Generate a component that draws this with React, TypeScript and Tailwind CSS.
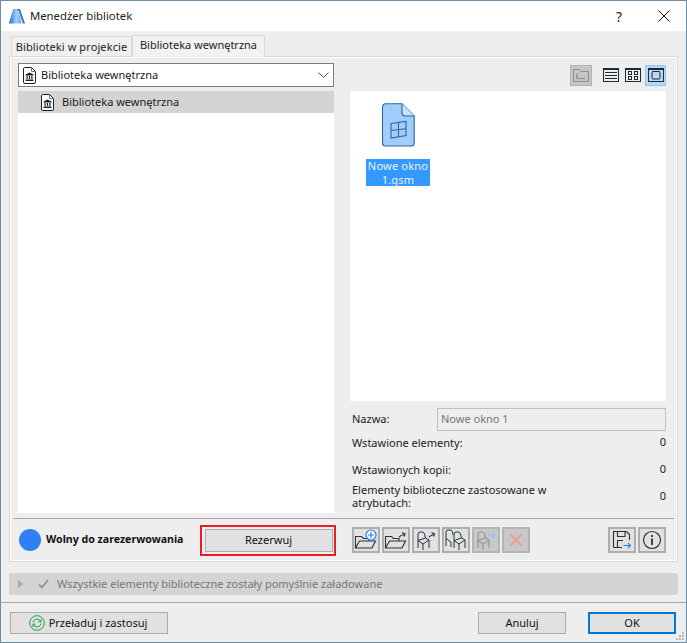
const LibIcon = () => (
  <svg width="13" height="17" viewBox="0 0 13 17" fill="none" stroke="#1a2228" strokeWidth="1">
    <path d="M1.5 .5H8.5L12.5 4.5V15A1.5 1.5 0 0 1 11 16.5H2A1.5 1.5 0 0 1 .5 15V2A1.5 1.5 0 0 1 1.5 .5Z" fill="#fff" />
    <path d="M8.5 .5V4.5H12.5" stroke="#777" />
    <path d="M2.5 8.5V7.5L6.5 5.5L10.5 7.5V8.5Z" fill="#1a2228" stroke="none" />
    <rect x="3.5" y="9" width="1.2" height="3" fill="#1a2228" stroke="none" />
    <rect x="5.9" y="9" width="1.2" height="3" fill="#1a2228" stroke="none" />
    <rect x="8.3" y="9" width="1.2" height="3" fill="#1a2228" stroke="none" />
    <rect x="2.5" y="12.5" width="8" height="1.5" fill="#1a2228" stroke="none" />
  </svg>
);

const Chair = ({ x = 0, y = 0, stroke = "#27323a" }: { x?: number; y?: number; stroke?: string }) => (
  <g transform={`translate(${x} ${y})`} fill="none" stroke={stroke} strokeWidth="1">
    <path d="M1 18V4Q1 2 3.5 2H5Q7 2 7.5 4L8.5 8" />
    <path d="M1 10.5L6 14L12 10L8.5 8Z" />
    <path d="M6 14V20M12 10V18" />
  </g>
);

const ToolBtn = ({ children, dim, className = "" }: { children?: React.ReactNode; dim?: boolean; className?: string }) => (
  <div className={`flex h-[26px] w-[28px] items-center justify-center border-2 ${dim ? "border-[#b4b4b4] bg-[#c8c8c8]" : "border-[#adadad] bg-[#e1e1e1]"} ${className}`}>
    {children}
  </div>
);

const Btn = ({ children, className = "" }: { children: React.ReactNode; className?: string }) => (
  <div className={`flex h-[22px] items-center justify-center bg-[#e1e1e1] text-[#111] ${className}`}>{children}</div>
);

const FolderIcon = ({ children }: { children?: React.ReactNode }) => (
  <svg width="24" height="22" viewBox="0 0 24 22" fill="none">
    <path d="M1.5 19V7.5H7.5L9.5 9.5H15V12M1.5 19L5.5 12H21.5L18 19H1.5Z" stroke="#27323a" strokeWidth="1.1" />
    {children}
  </svg>
);

const StatRow = ({ label, value, h }: { label: React.ReactNode; value: string; h: string }) => (
  <div className={`flex items-center justify-between pl-[2px] ${h}`}>
    <div className="w-[210px] leading-[13px]">{label}</div>
    <div>{value}</div>
  </div>
);

export default function App() {
  return (
    <div
      className="relative flex h-[643px] w-[687px] flex-col overflow-hidden border border-[#6e8ba6] bg-[#eeeeee] text-[11px] text-[#1a1a1a]"
      style={{ fontFamily: '"Noto Sans", sans-serif' }}
    >
      {/* Title bar */}
      <div className="flex h-[30px] shrink-0 items-center bg-white pl-[8px] pr-[14px]">
        <svg width="16" height="16" viewBox="0 0 16 16" className="mr-[5px]">
          <defs>
            <linearGradient id="lg" x1="0" x2="1" y1="0" y2="0">
              <stop offset="0" stopColor="#1f6ad8" />
              <stop offset="0.6" stopColor="#9fd0fb" />
              <stop offset="1" stopColor="#5aa6f5" />
            </linearGradient>
          </defs>
          <path d="M0 15.5L4.5 1H11L16 15.5H13.8L9.5 2.6Z" fill="#3f78c4" />
          <path d="M0 15.5L4.5 1H8Q11.5 8 12.5 15.5Z" fill="url(#lg)" />
        </svg>
        <span className="text-[11.3px] text-[#222]">Menedżer bibliotek</span>
        <span className="ml-auto mr-[36px] text-[14px] text-[#222]">?</span>
        <svg width="12" height="12" viewBox="0 0 12 12" stroke="#111" strokeWidth="1" className="mr-[2px]">
          <path d="M.5 .5L11.5 11.5M11.5 .5L.5 11.5" />
        </svg>
      </div>

      {/* Tabs */}
      <div className="flex h-[25px] shrink-0 items-end pl-[10px] pt-[4px]">
        <div className="flex h-[20px] w-[121px] items-center justify-center border border-b-0 border-[#d9d9d9] bg-[#f0f0f0] pt-[1px] tracking-[0.1px] text-[#222]">
          Biblioteki w projekcie
        </div>
        <div className="z-10 -mb-px flex h-[22px] w-[133px] items-center justify-center border border-b-0 border-[#d9d9d9] bg-[#f2f2f2] pb-[2px] text-[#222]">
          Biblioteka wewnętrzna
        </div>
      </div>

      {/* Panel */}
      <div className="mx-[8px] flex h-[506px] shrink-0 flex-col border border-[#d9d9d9] bg-[#eeeeee] shadow-[inset_0_0_0_1px_#ffffff]">
        <div className="flex h-[456px] shrink-0 gap-[16px] pl-[8px] pt-[6px]">
          {/* Left */}
          <div className="flex w-[316px] flex-col">
            <div className="flex h-[24px] shrink-0 items-center border border-[#7a7a7a] bg-white pl-[4px] pr-[4px]">
              <LibIcon />
              <span className="ml-[5px]">Biblioteka wewnętrzna</span>
              <svg width="11" height="6" viewBox="0 0 11 6" fill="none" stroke="#555" className="ml-auto">
                <path d="M.5 .5L5.5 5.5L10.5 .5" />
              </svg>
            </div>
            <div className="mt-[4px] flex-1 bg-white">
              <div className="flex h-[22px] items-center bg-[#d4d4d4] pl-[23px]">
                <LibIcon />
                <span className="ml-[8px]">Biblioteka wewnętrzna</span>
              </div>
            </div>
          </div>

          {/* Right */}
          <div className="flex w-[316px] flex-col">
            <div className="flex h-[24px] shrink-0 items-center">
              <div className="ml-[220px] flex h-[21px] w-[22px] items-center justify-center border border-[#b4b4b4] bg-[#c6c6c6]">
                <svg width="16" height="15" viewBox="0 0 16 15" fill="none" stroke="#8d8d8d">
                  <path d="M.5 13.5V1.5H6.5L8 3.5H15.5V13.5H.5Z" />
                  <path d="M5.5 5L3.5 7L5.5 9M3.5 7V10.5H12" />
                </svg>
              </div>
              <svg width="16" height="14" viewBox="0 0 16 14" fill="none" stroke="#1f2a33" className="ml-[11px]">
                <rect x=".5" y=".5" width="15" height="13" />
                <path d="M0 1H16" strokeWidth="2" />
                <path d="M2 4.5H14M2 7.5H14M2 10.5H14" />
              </svg>
              <svg width="16" height="14" viewBox="0 0 16 14" fill="none" stroke="#1f2a33" className="ml-[6px]">
                <rect x=".5" y=".5" width="15" height="13" />
                <path d="M0 1H16" strokeWidth="2" />
                <rect x="3.5" y="3.5" width="3" height="3" />
                <rect x="9.5" y="3.5" width="3" height="3" />
                <rect x="3.5" y="8.5" width="3" height="3" />
                <rect x="9.5" y="8.5" width="3" height="3" />
              </svg>
              <div className="ml-[4px] flex h-[21px] w-[21px] items-center justify-center border border-[#90c8f6] bg-[#b8d8f5]">
                <svg width="16" height="14" viewBox="0 0 16 14" fill="none" stroke="#1f2a33">
                  <rect x=".5" y=".5" width="15" height="13" />
                  <path d="M0 1H16" strokeWidth="2" />
                  <rect x="4" y="3.5" width="8" height="7.5" rx="1" />
                </svg>
              </div>
            </div>
            <div className="mt-[4px] flex h-[310px] shrink-0 flex-col bg-white pl-[16px] pt-[12px]">
              <div className="flex w-[64px] flex-col items-center">
                <svg width="33" height="44" viewBox="0 0 33 44" fill="none" stroke="#2f659c" strokeWidth="1.1">
                  <path d="M3.5 .8H20L32.2 13V40A3 3 0 0 1 29.2 43H3.5A3 3 0 0 1 .5 40V3.8A3 3 0 0 1 3.5 .8Z" fill="#a1cdfb" />
                  <path d="M20 .8V10A3 3 0 0 0 23 13H32.2" fill="#c7e2fd" />
                  <path d="M9 20.5L24 18.5V32.5L9 35Z" />
                  <path d="M16.5 19.5V34M9 27.5L24 25.8" />
                </svg>
                <div className="mt-[12px] h-[27px] w-[64px] bg-[#3399ff] text-center leading-[13.5px] tracking-[0.2px] text-[#e8f3ff]">
                  Nowe okno
                  <br />
                  1.gsm
                </div>
              </div>
            </div>
            <div className="mt-[7px] flex h-[23px] shrink-0 items-center">
              <span className="ml-[2px] w-[85px]">Nazwa:</span>
              <div className="flex h-[23px] flex-1 items-center border border-[#c0c0c0] bg-[#eeeeee] pl-[3px] text-[#777]">Nowe okno 1</div>
            </div>
            <StatRow h="h-[22px] shrink-0" label="Wstawione elementy:" value="0" />
            <StatRow h="mt-[5px] h-[22px] shrink-0" label="Wstawionych kopii:" value="0" />
            <StatRow
              h="mt-[2px] h-[28px] shrink-0"
              label={
                <>
                  Elementy biblioteczne zastosowane w
                  <br />
                  atrybutach:
                </>
              }
              value="0"
            />
          </div>
        </div>

        {/* Action row */}
        <div className="mx-[3px] mt-[5px] flex h-[43px] shrink-0 items-center border-t border-[#a8a8a8] pl-[6px]">
          <div className="h-[22px] w-[22px] shrink-0 rounded-full bg-[radial-gradient(circle_at_38%_38%,#2f80f5_72%,#1f62c8_100%)]" />
          <span className="ml-[5px] w-[154px] text-[10.6px] font-bold text-[#111]">Wolny do zarezerwowania</span>
          <div className="flex h-[31px] w-[136px] items-center justify-center border-2 border-[#ec1c24] pl-[1px]">
            <Btn className="h-[23px] w-[128px] border border-[#adadad]">Rezerwuj</Btn>
          </div>
          <div className="ml-[16px] flex gap-[2px]">
            <ToolBtn>
              <FolderIcon>
                <circle cx="17" cy="6" r="5" fill="#fff" stroke="#2e7bf0" strokeWidth="1.2" />
                <path d="M14 6H20M17 3V9" stroke="#2e7bf0" strokeWidth="1.2" />
              </FolderIcon>
            </ToolBtn>
            <ToolBtn>
              <FolderIcon>
                <path d="M15 8Q17 6 20.5 5.5M18 3.5L21 5L20 7.5" stroke="#27323a" strokeWidth="1.2" />
              </FolderIcon>
            </ToolBtn>
            <ToolBtn>
              <svg width="22" height="21" viewBox="0 0 22 21" fill="none">
                <Chair x={2} />
                <path d="M14 7Q16 5 19 4.5M16.5 2.5L19.5 4L18.5 6.5" stroke="#27323a" strokeWidth="1.2" />
              </svg>
            </ToolBtn>
            <ToolBtn>
              <svg width="24" height="22" viewBox="0 0 24 22" fill="none">
                <g transform="translate(1 0)" fill="none" stroke="#27323a" strokeWidth="1">
                  <path d="M1 17V3Q1 1 3 1H5Q7 1 7.5 3L8 6" />
                  <path d="M1 9.5L6 13" />
                  <path d="M6 13V18" />
                </g>
                <Chair x={9} y={1} />
              </svg>
            </ToolBtn>
            <ToolBtn dim>
              <svg width="22" height="21" viewBox="0 0 22 21" fill="none">
                <Chair x={2} stroke="#8c8c8c" />
                <path d="M13 5H20M17.5 2.5L20 5L17.5 7.5" stroke="#94bff2" strokeWidth="1.1" />
              </svg>
            </ToolBtn>
            <ToolBtn dim>
              <svg width="14" height="14" viewBox="0 0 14 14" stroke="#eb9e90" strokeWidth="1.8">
                <path d="M1 1L13 13M13 1L1 13" />
              </svg>
            </ToolBtn>
          </div>
          <ToolBtn className="ml-[78px]">
            <svg width="20" height="20" viewBox="0 0 20 20" fill="none" stroke="#27323a" strokeWidth="1.1">
              <path d="M1.5 17.5V1.5H14.5L17.5 4.5V10M1.5 17.5H10" />
              <path d="M5.5 1.5V6.5H13V1.5M5.5 17.5V10.5H11" />
              <path d="M11.5 15.5H18.5M16 13L18.5 15.5L16 18" stroke="#2e7bf0" />
            </svg>
          </ToolBtn>
          <ToolBtn className="ml-[2px]">
            <svg width="20" height="20" viewBox="0 0 20 20" fill="none" stroke="#27323a" strokeWidth="1.2">
              <circle cx="10" cy="10" r="8.5" />
              <path d="M10 8.5V15" strokeWidth="1.8" />
              <path d="M10 5V7" strokeWidth="1.8" />
            </svg>
          </ToolBtn>
        </div>
      </div>

      {/* Status bar */}
      <div className="mx-[8px] mt-[11px] flex h-[22px] shrink-0 items-center rounded-[3px] bg-[#d4d4d4] pl-[9px] text-[#777]">
        <svg width="5" height="8" viewBox="0 0 5 8" fill="#a8a8a8">
          <path d="M0 0L5 4L0 8Z" />
        </svg>
        <svg width="11" height="10" viewBox="0 0 11 10" fill="none" stroke="#909090" strokeWidth="1.8" className="ml-[15px]">
          <path d="M1 5.5L4 8.5L10 1" />
        </svg>
        <span className="ml-[8px]">Wszystkie elementy biblioteczne zostały pomyślnie załadowane</span>
      </div>

      {/* Footer */}
      <div className="mt-[7px] flex h-[40px] shrink-0 items-start border-t border-[#a8a8a8] pl-[9px] pt-[9px]">
        <Btn className="w-[158px] border border-[#adadad] pr-[2px]">
          <svg width="16" height="16" viewBox="0 0 16 16" fill="none" stroke="#1f9e4d" strokeWidth="1" className="mr-[4px]">
            <circle cx="8" cy="8" r="7.3" />
            <path d="M4 7.5A4 4 0 0 1 11 5.5L12 6.5M12 4V6.8H9.4" />
            <path d="M12 8.5A4 4 0 0 1 5 10.5L4 9.5M4 12V9.2H6.6" />
          </svg>
          Przeładuj i zastosuj
        </Btn>
        <Btn className="ml-[310px] w-[88px] border border-[#adadad]">Anuluj</Btn>
        <Btn className="ml-[22px] w-[88px] border-[2px] border-[#0078d7]">OK</Btn>
      </div>

      {/* Resize grip */}
      <svg width="9" height="9" viewBox="0 0 9 9" fill="#b8b8b8" className="absolute bottom-[1px] right-[1px]">
        <rect x="6" y="0" width="2" height="2" />
        <rect x="3" y="3" width="2" height="2" />
        <rect x="6" y="3" width="2" height="2" />
        <rect x="0" y="6" width="2" height="2" />
        <rect x="3" y="6" width="2" height="2" />
        <rect x="6" y="6" width="2" height="2" />
      </svg>
    </div>
  );
}
